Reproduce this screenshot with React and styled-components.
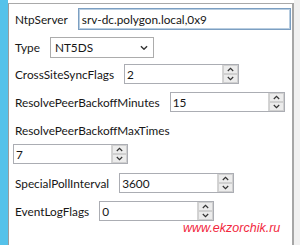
import React from "react";
import styled, { createGlobalStyle } from "styled-components";

const GlobalStyle = createGlobalStyle`
  html, body {
    margin: 0;
    padding: 0;
    background: #ffffff;
  }
  body {
    font-family: Lato, "Noto Sans", sans-serif;
    font-size: 11.8px;
    color: #161616;
  }
`;

function ChevronUp() {
  return (
    <svg width="7" height="5" viewBox="0 0 7 5">
      <path d="M0.8 4 L3.5 1.3 L6.2 4" fill="none" stroke="#333" strokeWidth="1.2" />
    </svg>
  );
}

function ChevronDown({ size = 7 }) {
  return (
    <svg width={size} height={size * 0.72} viewBox="0 0 7 5">
      <path d="M0.8 1 L3.5 3.7 L6.2 1" fill="none" stroke="#333" strokeWidth="1.2" />
    </svg>
  );
}

function Spinner({ value, $ml }) {
  return (
    <SpinBox $ml={$ml}>
      <SpinValue>{value}</SpinValue>
      <SpinButtons>
        <SpinButton>
          <ChevronUp />
        </SpinButton>
        <SpinButton>
          <ChevronDown />
        </SpinButton>
      </SpinButtons>
    </SpinBox>
  );
}

function App() {
  return (
    <Page>
      <GlobalStyle />
      <Strip />
      <Main>
        <Panel>
          <Row $mt={4} $h={22}>
            <Label>NtpServer</Label>
            <TextBox>srv-dc.polygon.local,0x9</TextBox>
          </Row>
          <Row $mt={7} $h={21}>
            <Label>Type</Label>
            <Select>
              NT5DS
              <ChevronDown size={8} />
            </Select>
          </Row>
          <Row $mt={6} $h={20}>
            <Label>CrossSiteSyncFlags</Label>
            <Spinner value="2" />
          </Row>
          <Row $mt={8} $h={20}>
            <Label>ResolvePeerBackoffMinutes</Label>
            <Spinner value="15" />
          </Row>
          <Row $mt={8} $h={20}>
            <Label>ResolvePeerBackoffMaxTimes</Label>
          </Row>
          <Row $mt={4} $h={20}>
            <Spinner value="7" $ml={-2} />
          </Row>
          <Row $mt={9} $h={20}>
            <Label>SpecialPollInterval</Label>
            <Spinner value="3600" />
          </Row>
          <Row $mt={8} $h={20}>
            <Label>EventLogFlags</Label>
            <Spinner value="0" />
          </Row>
          <Watermark>www.ekzorchik.ru</Watermark>
        </Panel>
        <Gutter />
      </Main>
    </Page>
  );
}

export default App;

const Page = styled.div`
  display: flex;
  width: 300px;
  height: 245px;
  overflow: hidden;
`;

const Strip = styled.div`
  width: 8px;
  background: #55c2ea;
  flex-shrink: 0;
`;

const Main = styled.div`
  flex: 1;
  display: flex;
  padding-top: 3px;
  background: #ffffff;
`;

const Panel = styled.div`
  position: relative;
  flex: 1;
  display: flex;
  flex-direction: column;
  border-top: 1px solid #a9a9a9;
  border-left: 1px solid #9c9c9c;
  border-right: 2px solid #a6a6a6;
  padding-left: 6px;
  background: #ffffff;
`;

const Gutter = styled.div`
  width: 6px;
  margin-top: -3px;
  background: #f0f0f0;
`;

const Row = styled.div`
  display: flex;
  align-items: center;
  gap: 10px;
  height: ${(p) => p.$h}px;
  margin-top: ${(p) => p.$mt}px;
`;

const Label = styled.span`
  white-space: nowrap;
`;

const TextBox = styled.div`
  box-sizing: border-box;
  width: 213px;
  height: 100%;
  display: flex;
  align-items: center;
  padding-left: 3px;
  border: 1px solid #7c9fc2;
  box-shadow: inset 0 0 0 1px #b8cde0;
  white-space: nowrap;
  overflow: hidden;
`;

const Select = styled.div`
  box-sizing: border-box;
  width: 104px;
  height: 100%;
  display: flex;
  align-items: center;
  justify-content: space-between;
  padding: 0 5px 0 4px;
  border: 1px solid #acacac;
  background: #ffffff;
`;

const SpinBox = styled.div`
  box-sizing: border-box;
  width: 115px;
  height: 100%;
  display: flex;
  margin-left: ${(p) => p.$ml || 0}px;
  border: 1px solid #abadb3;
  background: #ffffff;
`;

const SpinValue = styled.div`
  flex: 1;
  display: flex;
  align-items: center;
  padding-left: 2px;
`;

const SpinButtons = styled.div`
  width: 15px;
  display: flex;
  flex-direction: column;
  border-left: 1px solid #d4d4d4;
`;

const SpinButton = styled.div`
  flex: 1;
  display: flex;
  align-items: center;
  justify-content: center;
  background: #ececec;
  border: 1px solid #d0d0d0;
`;

const Watermark = styled.span`
  position: absolute;
  left: 174px;
  top: 217px;
  font-family: "Liberation Sans", Arial, sans-serif;
  font-style: italic;
  font-size: 12.5px;
  color: #f2273d;
  white-space: nowrap;
`;
